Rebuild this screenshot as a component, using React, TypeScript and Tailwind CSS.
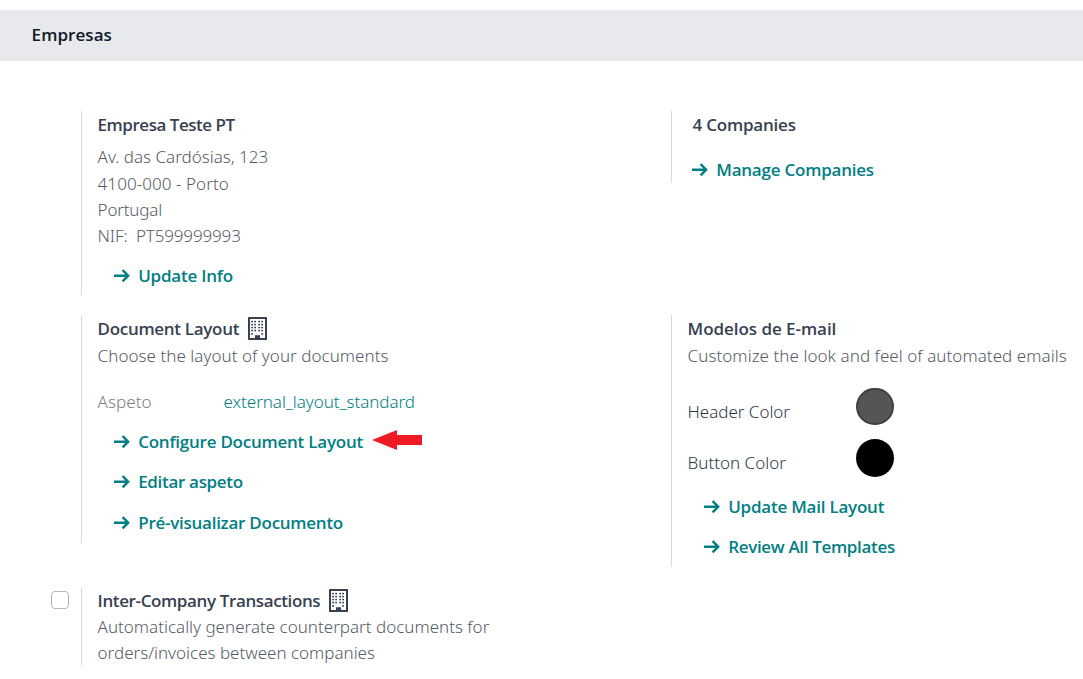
import React from "react";

type TextProps = { children: React.ReactNode; className?: string };

const REGULAR = "font-['Noto_Sans',sans-serif] font-light";
const STRONG = "font-['Open_Sans',sans-serif] font-[560]";

function Line({ children, className = "" }: TextProps) {
  return <div className={`h-[26px] leading-[26px] whitespace-nowrap ${REGULAR} ${className}`}>{children}</div>;
}

function Title({ children, className = "" }: TextProps) {
  return <div className={`flex h-[26px] leading-[26px] whitespace-nowrap text-[#374151] ${STRONG} ${className}`}>{children}</div>;
}

function Arrow() {
  return (
    <svg className="mt-[6px] mr-[8px] h-[14px] w-[16px] shrink-0" viewBox="0 0 16 14" fill="none" stroke="currentColor" strokeWidth="2.4">
      <path d="M0 6.7H14M8.6 1.1L14.2 6.7L8.6 12.3" />
    </svg>
  );
}

function Action({ children, className = "" }: TextProps) {
  return (
    <a className={`flex h-[26px] leading-[26px] whitespace-nowrap text-[#017e84] ${STRONG} ${className}`}>
      <Arrow />
      {children}
    </a>
  );
}

function Building({ className = "" }: { className?: string }) {
  const rows = [4, 7, 10, 13];
  const cols = [3, 6, 10, 13];
  return (
    <svg className={`mt-[1px] h-[23px] w-[19px] shrink-0 ${className}`} viewBox="0 0 19 23">
      <path fill="#374151" fillRule="evenodd" d="M0.5 0H18.5L19 0.5V22.5L18.5 23H0.5L0 22.5V0.5ZM2 2V21H7V18.5H12V21H17V2Z" />
      <g fill="#374151">
        <rect x="7" y="18.5" width="5" height="3" />
        {rows.map((y) => cols.map((x) => <rect key={`${x}-${y}`} x={x + 0.2} y={y - 0.2} width="1.8" height="1.5" />))}
        <rect x="3.2" y="16.2" width="1.8" height="1.5" />
        <rect x="13.2" y="16.2" width="1.8" height="1.5" />
      </g>
    </svg>
  );
}

function Box({ children, className = "" }: TextProps) {
  return <section className={`border-l border-[#d8dadd] pl-[15.6px] ${className}`}>{children}</section>;
}

export default function App() {
  return (
    <main className="h-[679px] w-[1083px] overflow-hidden bg-white pt-[10px] text-[17px]">
      <header className="h-[51px] bg-[#e7e9ed] pt-[12px] pl-[31.6px]">
        <h2 className={`leading-[26px] tracking-[0.06px] text-[#111827] ${STRONG}`}>Empresas</h2>
      </header>

      <div className="mt-[50px] grid grid-cols-[590px_1fr] items-start gap-y-[20px] pl-[81px]">
        <Box className="h-[184px]">
          <Title className="mt-[1px] tracking-[-0.47px]">Empresa Teste PT</Title>
          <Line className="mt-[6px] text-[#555b66]">Av. das Cardósias, 123</Line>
          <Line className="mt-[1px] tracking-[0.06px] text-[#555b66]">4100-000 - Porto</Line>
          <Line className="tracking-[-0.2px] text-[#555b66]">Portugal</Line>
          <Line className="tracking-[-0.15px] text-[#555b66]">NIF:&nbsp; PT599999993</Line>
          <Action className="mt-[14px] ml-[16.6px] tracking-[-0.22px]">Update Info</Action>
        </Box>
        <Box className="h-[72px]">
          <Title className="mt-[1px] ml-[5px] tracking-[-0.22px]">4 Companies</Title>
          <Action className="mt-[19px] ml-[4.6px] tracking-[-0.22px]">Manage Companies</Action>
        </Box>

        <Box className="h-[228px]">
          <Title className="mt-[1px] tracking-[-0.31px]">Document Layout<Building className="ml-[9.4px]" /></Title>
          <Line className="mt-[1px] tracking-[0.04px] text-[#555b66]">Choose the layout of your documents</Line>
          <div className="mt-[20px] flex">
            <Line className="w-[126px] tracking-[0.05px] text-[#7b808a]">Aspeto</Line>
            <Line className="tracking-[-0.06px] text-[#017e84]">external_layout_standard</Line>
          </div>
          <div className="mt-[14px] ml-[16.6px] flex">
            <Action className="w-[249px] tracking-[-0.24px]">Configure Document Layout</Action>
            <svg className="mt-[1px] ml-[8.8px] h-[20px] w-[50px]" viewBox="0 0 50 20" fill="#ed1c24">
              <path d="M0 10L25 0V5H50V15H25V20Z" />
            </svg>
          </div>
          <Action className="mt-[14px] ml-[16.6px] tracking-[-0.32px]">Editar aspeto</Action>
          <Action className="mt-[15px] ml-[16.6px] tracking-[-0.26px]">Pré-visualizar Documento</Action>
        </Box>
        <Box className="h-[252px]">
          <Title className="mt-[1px] tracking-[-0.05px]">Modelos de E-mail</Title>
          <Line className="mt-[1px] tracking-[0.055px] text-[#555b66]">Customize the look and feel of automated emails</Line>
          <div className="mt-[19px] flex h-[38px]">
            <Line className="mt-[11px] w-[168.4px] tracking-[-0.03px] text-[#303846]">Header Color</Line>
            <span className="h-[37px] w-[38px] rounded-full border-2 border-[#404040] bg-[#555555]" />
          </div>
          <div className="mt-[13px] flex h-[38px]">
            <Line className="mt-[11px] w-[168.4px] text-[#303846]">Button Color</Line>
            <span className="size-[38px] rounded-full bg-black" />
          </div>
          <Action className="mt-[17px] ml-[16.6px] tracking-[-0.23px]">Update Mail Layout</Action>
          <Action className="mt-[14px] ml-[16.6px] tracking-[-0.33px]">Review All Templates</Action>
        </Box>

        <div className="-ml-[30px] flex">
          <span className="mt-[4px] mr-[12px] size-[18px] shrink-0 rounded-[4px] border border-[#b4b6ba] bg-white" />
          <Box className="h-[79px]">
            <Title className="mt-[1px] tracking-[-0.38px]">Inter-Company Transactions<Building className="ml-[9px]" /></Title>
            <Line className="text-[#555b66]">Automatically generate counterpart documents for</Line>
            <Line className="tracking-[-0.01px] text-[#555b66]">orders/invoices between companies</Line>
          </Box>
        </div>
      </div>
    </main>
  );
}
